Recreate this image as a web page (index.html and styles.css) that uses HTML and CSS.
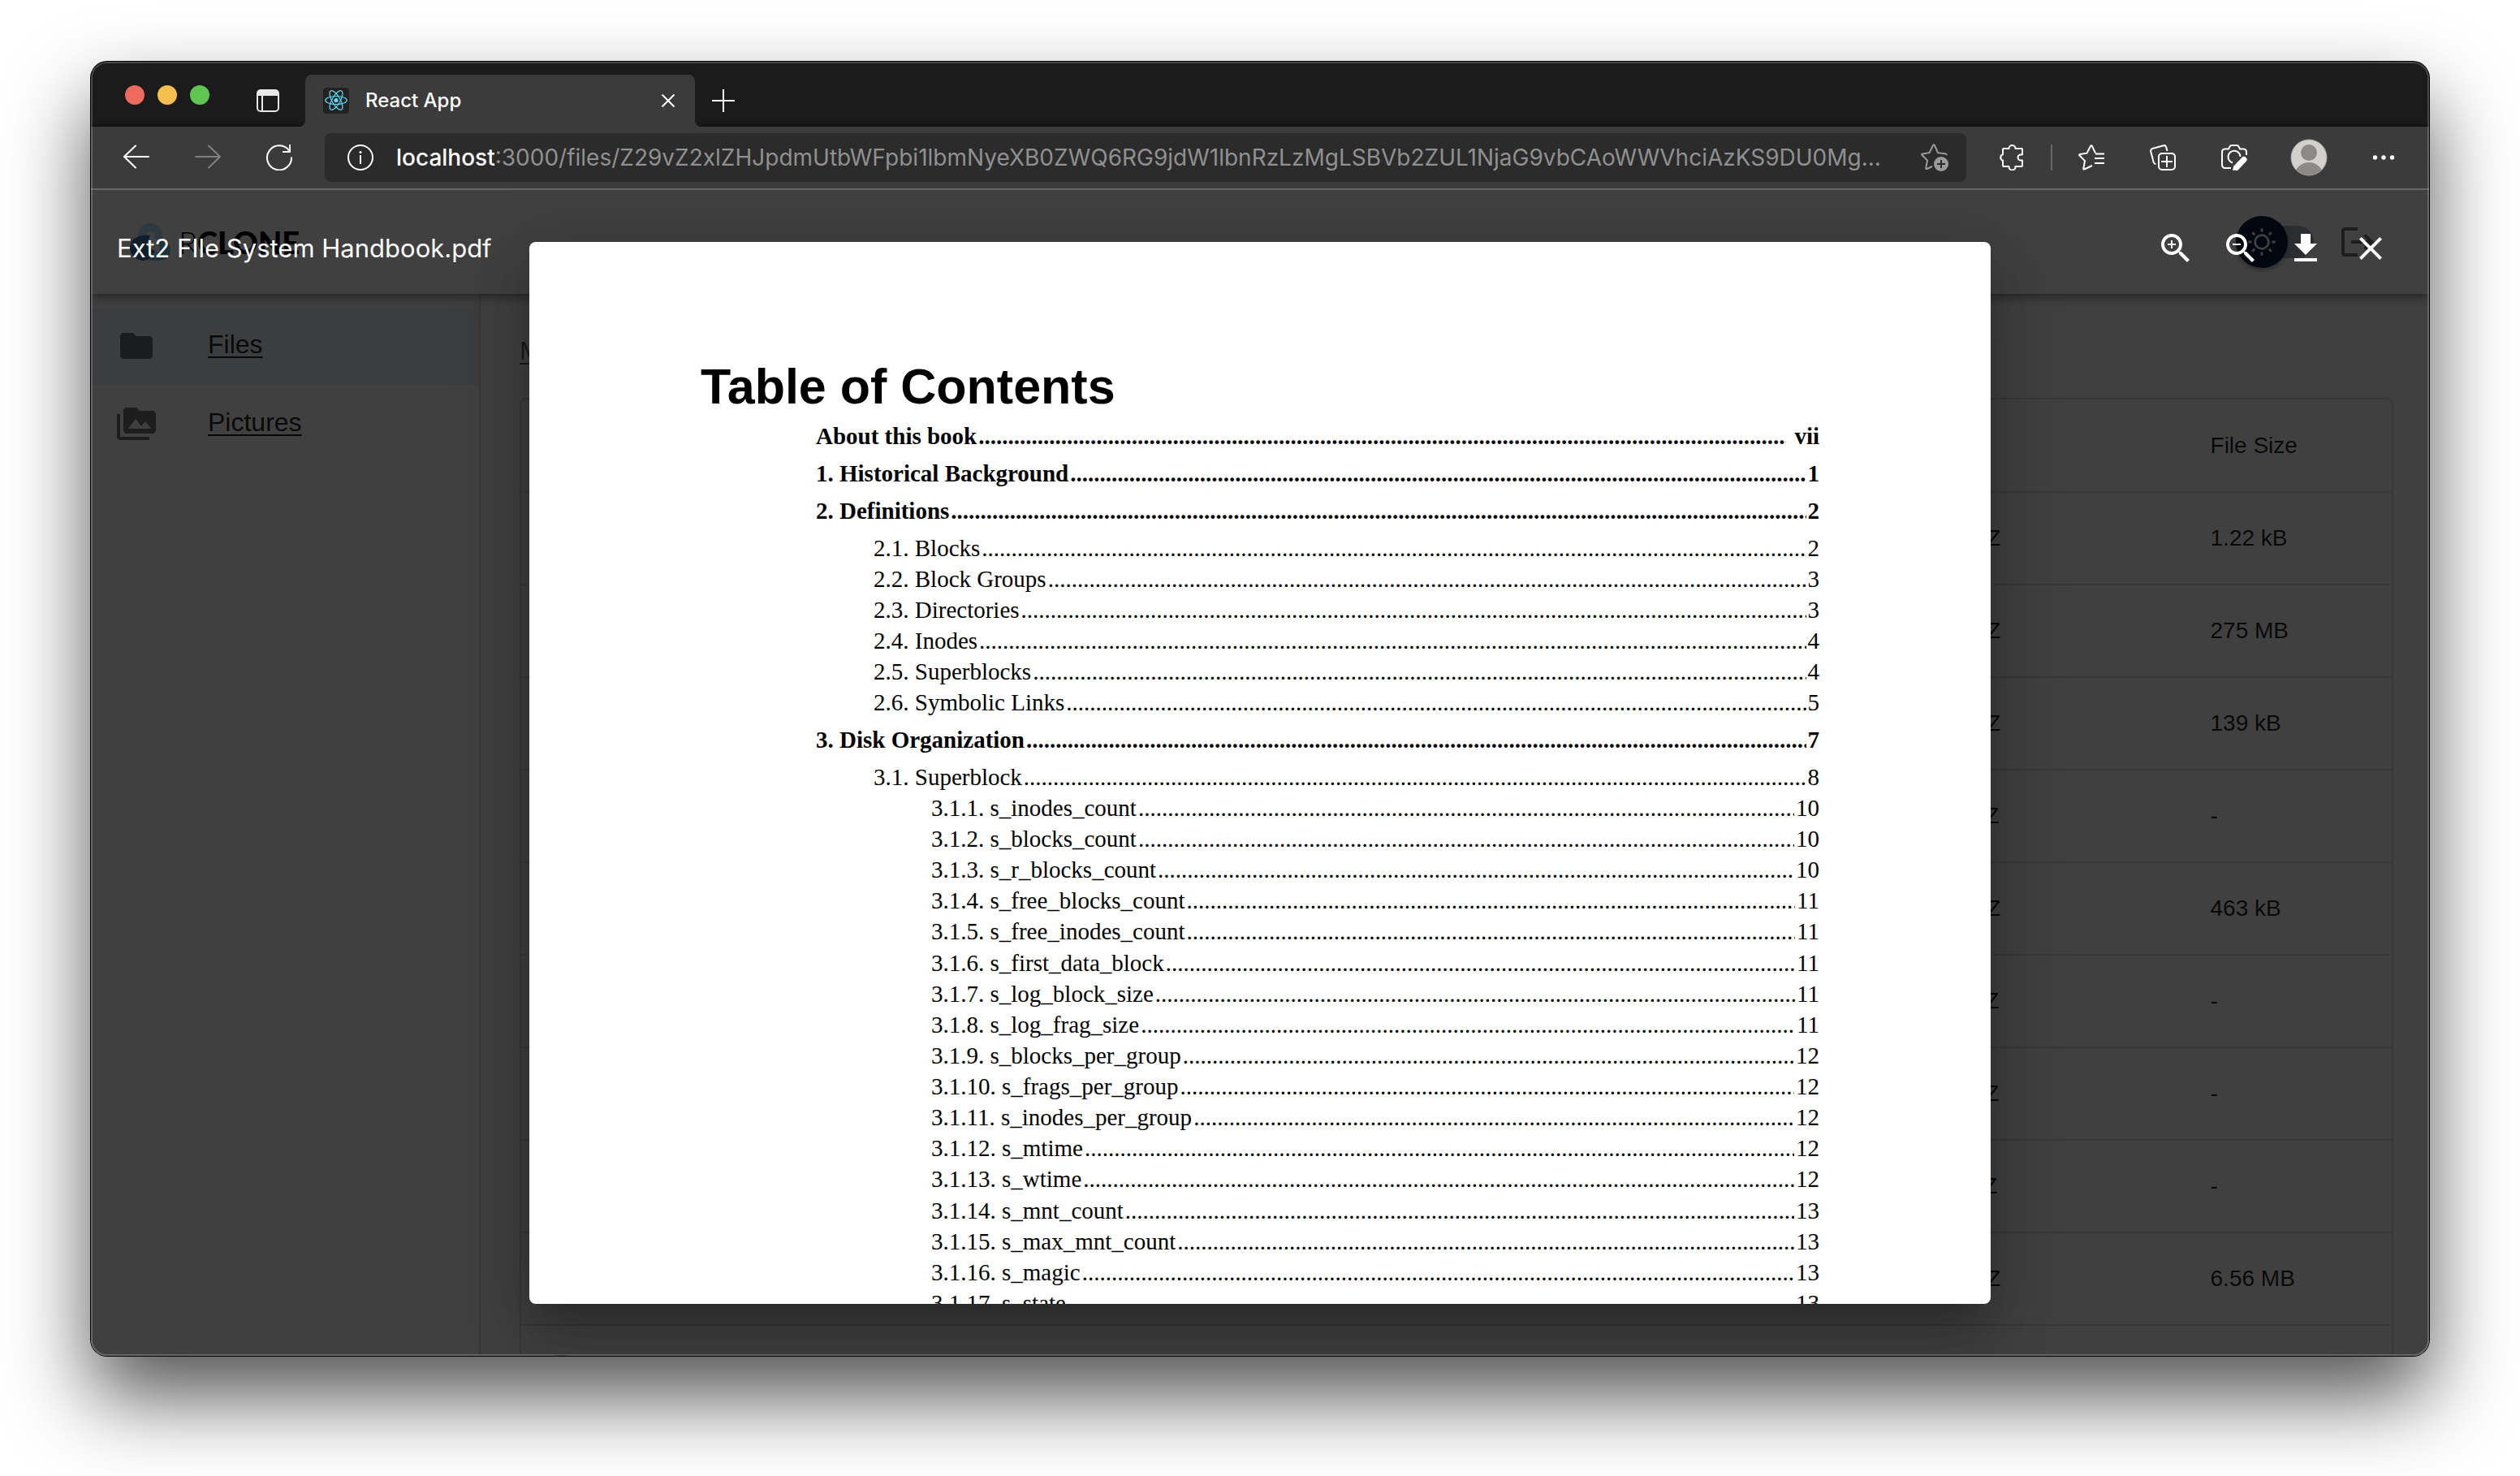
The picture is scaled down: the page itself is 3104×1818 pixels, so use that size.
FILE: index.html
```html
<!DOCTYPE html>
<html lang="en">
<head>
<meta charset="utf-8">
<title>React App</title>
<link rel="stylesheet" href="styles.css">
</head>
<body>
<div class="window">
  <header class="tab-strip">
    <div class="lights"><button class="light red" aria-label="Close window"></button><button class="light yellow" aria-label="Minimise"></button><button class="light green" aria-label="Full screen"></button></div>
    <button class="tab-menu" aria-label="Tab actions">
      <svg width="28" height="28" viewBox="0 0 28 28" fill="none"><rect x="1" y="1" width="26" height="26" rx="4" stroke="#e8e8e8" stroke-width="2"/><path d="M1 5a4 4 0 0 1 4-4h18a4 4 0 0 1 4 4v3H1z" fill="#e8e8e8"/><path d="M7 8v19" stroke="#e8e8e8" stroke-width="2"/></svg>
    </button>
    <div class="tab">
      <svg width="32" height="32" viewBox="0 0 32 32"><rect width="32" height="32" rx="4" fill="#222"/><g fill="none" stroke="#61dafb" stroke-width="1.2"><ellipse cx="16" cy="15.500" rx="13.300" ry="5"/><ellipse cx="16" cy="15.500" rx="13.300" ry="5" transform="rotate(60 16 15.500)"/><ellipse cx="16" cy="15.500" rx="13.300" ry="5" transform="rotate(120 16 15.500)"/></g><circle cx="16" cy="15.500" r="2.600" fill="#61dafb"/></svg>
      <span class="tab-title">React App</span>
      <button class="tab-close" aria-label="Close tab"><svg width="16" height="16" viewBox="0 0 16 16" stroke="#fff" stroke-width="2"><path d="M0.500.500l15 15M15.500.500l-15 15"/></svg></button>
    </div>
    <button class="new-tab" aria-label="New tab"><svg width="28" height="28" viewBox="0 0 28 28" stroke="#fff" stroke-width="2"><path d="M14 0v28M0 14h28"/></svg></button>
  </header>

  <div class="toolbar">
    <nav class="history" aria-label="History">
      <button aria-label="Back"><svg width="32" height="32" viewBox="0 0 32 32" fill="none" stroke="#fff" stroke-width="2" stroke-linecap="round"><path d="M1 15h30M15 1.500L1 15l14 13.500"/></svg></button>
      <button aria-label="Forward"><svg width="32" height="32" viewBox="0 0 32 32" fill="none" stroke="#7f7f7f" stroke-width="2" stroke-linecap="round"><path d="M1 15h30M17 1.500L31 15 17 28.500"/></svg></button>
      <button aria-label="Reload"><svg width="32" height="32" viewBox="0 0 32 32" fill="none" stroke="#fff" stroke-width="2"><path d="M31 15.500A15 15 0 1 1 28.500 8M29 0v9h-9"/></svg></button>
    </nav>
    <div class="address">
      <svg width="32" height="32" viewBox="0 0 32 32" fill="none" stroke="#fff" stroke-width="2"><circle cx="16" cy="16" r="15"/><path d="M16 13v11"/><circle cx="16" cy="9.500" r="1.500" fill="#fff" stroke="none"/></svg>
      <span class="url"><b>localhost</b>:3000/files/Z29vZ2xlZHJpdmUtbWFpbi1lbmNyeXB0ZWQ6RG9jdW1lbnRzLzMgLSBVb2ZUL1NjaG9vbCAoWWVhciAzKS9DU0Mg...</span>
      <button aria-label="Add to favourites"><svg width="34" height="34" viewBox="0 0 34 34" fill="none"><path d="M14 28l-6.500 3q-1.500.500-1.200-1l1.700-9.500-6.500-6.500q-1-1.200.500-1.500l8.500-1.300L15 2q1-1.500 2 0l4 9.200 9.500 1.300q1.500.300.800 1.500" stroke="#9b9b9b" stroke-width="2"/><circle cx="25" cy="25" r="9" fill="#9b9b9b"/><path d="M25 20v10M20 25h10" stroke="#2b2b2b" stroke-width="2"/></svg></button>
    </div>
    <div class="tools">
      <button aria-label="Extensions"><svg width="32" height="32" viewBox="0 0 32 32" fill="none" stroke="#fff" stroke-width="2" stroke-linejoin="round"><path d="M6 5h6.500a4 4 0 0 1 8 0H28q1 0 1 1v6.500h-2a3.500 3.500 0 0 0 0 7h2V26q0 1-1 1h-7.500v.500a4 4 0 0 1-8 0V27H6q-1 0-1-1v-6.200a4 4 0 0 1 0-7.600V6q0-1 1-1z"/></svg></button>
      <i class="divider"></i>
      <button aria-label="Favourites"><svg width="32" height="32" viewBox="0 0 32 32" fill="none" stroke="#fff" stroke-width="2"><path d="M17 26l-9.500 4.500q-1.500.500-1.200-1L8 20 1.500 13.500q-1-1.200.500-1.500l8.500-1.300L15 2q1-1.500 2 0l4 8.500M21 11.500h11M20 17h12M20 23h12"/></svg></button>
      <button aria-label="Collections"><svg width="32" height="32" viewBox="0 0 32 32" fill="none" stroke="#fff" stroke-width="2"><rect x="11" y="11" width="20" height="20" rx="4"/><path d="M21 14v14M14 21h14M7.500 24q-2 0-2.800-2L1.200 8.500q-.500-2.500 2-3.500L17 1.200q2.500-.500 3.200 2L21.500 8"/></svg></button>
      <button aria-label="Web capture"><svg width="32" height="32" viewBox="0 0 32 32" fill="none" stroke="#fff" stroke-width="2"><path d="M12 29H5q-4 0-4-4V9.500q0-4 4-4h4l1.500-3Q11.200 1 13 1h6q1.800 0 2.500 1.500l1.500 3h4q4 0 4 4V13M14 22.500A7.500 7.500 0 1 1 23.500 15"/><path d="M18.500 28.500l9.500-10" stroke-width="7" stroke-linecap="round"/><path d="M14 32l1.500-6 5 4.500z" fill="#fff" stroke="none"/></svg></button>
      <button class="profile" aria-label="Profile"><svg width="46" height="46" viewBox="0 0 46 46"><defs><clipPath id="disc"><circle cx="23" cy="23" r="22"/></clipPath></defs><circle cx="23" cy="23" r="22" fill="#d2d1ce" stroke="#a9a8a5" stroke-width="1"/><g clip-path="url(#disc)" fill="#8b8a88"><circle cx="23" cy="17" r="10"/><circle cx="23" cy="47" r="18"/></g></svg></button>
      <button aria-label="Settings and more"><svg width="32" height="32" viewBox="0 0 32 32" fill="#fff"><circle cx="5.500" cy="16" r="2.700"/><circle cx="16" cy="16" r="2.700"/><circle cx="26.500" cy="16" r="2.700"/></svg></button>
    </div>
  </div>

  <div class="viewport">
    <div class="app">
      <header class="app-bar">
        <a class="brand" href="#" aria-label="rclone">
          <svg width="52" height="52" viewBox="0 0 52 52"><path d="M10 25V18a15 15 0 0 1 30 0q0 4-1.500 7l-8-3q2-8-5.500-9-6 0-6 8z" fill="#b4e3f9"/><path d="M37 20q12 4 13 15 0 13-14 14H22q10-4 10-10 5 0 5-5 0-3-3-5z" fill="#70caf2"/><path d="M12 19q6-3 13-1l-4 10q2 6 10 9-4 12-15 12Q1 47 0 34 0 22 12 19z" fill="#3f79ad"/></svg>
          <span class="brand-name"><span class="brand-thin">R</span>CLONE</span>
        </a>
        <div class="app-actions">
          <label class="mode"><input type="checkbox" aria-label="Dark mode"><span class="thumb"><svg width="40" height="40" viewBox="0 0 20 20" fill="#fff"><path d="M9.305 1.667V3.750h1.389V1.667h-1.390zm-4.707 1.950l-.982.982L5.090 6.072l.982-.982-1.473-1.473zm10.802 0L13.927 5.090l.982.982 1.473-1.473-.982-.982zM10 5.139a4.872 4.872 0 00-4.862 4.860A4.872 4.872 0 0010 14.862 4.872 4.872 0 0014.860 10 4.872 4.872 0 0010 5.139zm0 1.389A3.462 3.462 0 0113.471 10a3.462 3.462 0 01-3.473 3.472A3.462 3.462 0 016.527 10 3.462 3.462 0 0110 6.528zM1.665 9.305v1.390h2.083v-1.390H1.666zm14.583 0v1.390h2.084v-1.390h-2.084zM5.090 13.928L3.616 15.400l.982.982 1.473-1.473-.982-.982zm9.820 0l-.982.982 1.473 1.473.982-.982-1.473-1.473zM9.305 16.250v2.083h1.389V16.250h-1.390z"/></svg></span></label>
          <button class="icon-button muted" aria-label="Log out"><svg width="48" height="48" viewBox="0 0 24 24" fill="currentColor"><path d="m17 7-1.410 1.410L18.170 11H8v2h10.170l-2.580 2.580L17 17l5-5zM4 5h8V3H4c-1.100 0-2 .9-2 2v14c0 1.100.9 2 2 2h8v-2H4V5z"/></svg></button>
        </div>
      </header>
      <div class="app-body">
        <nav class="sidebar">
          <a class="side-item selected" href="#"><svg width="48" height="48" viewBox="0 0 24 24" fill="currentColor"><path d="M10 4H4c-1.100 0-1.990.9-1.990 2L2 18c0 1.100.9 2 2 2h16c1.100 0 2-.9 2-2V8c0-1.100-.9-2-2-2h-8l-2-2z"/></svg><span>Files</span></a>
          <a class="side-item" href="#"><svg width="48" height="48" viewBox="0 0 24 24" fill="currentColor"><path d="M2 6H0v5h.01L0 20c0 1.100.9 2 2 2h18v-2H2V6zm20-2h-8l-2-2H6c-1.100 0-1.990.9-1.990 2L4 16c0 1.100.9 2 2 2h16c1.100 0 2-.9 2-2V6c0-1.100-.9-2-2-2zM7 15l4.500-6 3.500 4.510 2.500-3.010L21 15H7z"/></svg><span>Pictures</span></a>
        </nav>
        <main class="content">
          <a class="crumb" href="#">My Files</a>
          <div class="card">
            <table class="files">
              <colgroup><col class="col-name"><col class="col-date"><col class="col-size"></colgroup>
              <thead><tr><th>Name</th><th>Last Modified</th><th>File Size</th></tr></thead>
              <tbody>
                <tr><td></td><td>2020-09-24T08:35:06.000Z</td><td>1.22 kB</td></tr>
                <tr><td></td><td>2020-09-24T08:35:26.000Z</td><td>275 MB</td></tr>
                <tr><td></td><td>2020-10-02T04:25:36.000Z</td><td>139 kB</td></tr>
                <tr><td></td><td>2020-11-02T04:25:36.000Z</td><td>-</td></tr>
                <tr><td></td><td>2020-10-08T03:25:36.000Z</td><td>463 kB</td></tr>
                <tr><td></td><td>2020-11-08T03:25:36.000Z</td><td>-</td></tr>
                <tr><td></td><td>2020-11-20T05:25:36.000Z</td><td>-</td></tr>
                <tr><td></td><td>2020-11-11T05:25:36.000Z</td><td>-</td></tr>
                <tr><td></td><td>2020-09-20T05:25:36.000Z</td><td>6.56 MB</td></tr>
                <tr><td><svg width="48" height="48" viewBox="0 0 24 24" fill="currentColor"><path d="M6 2c-1.100 0-1.990.9-1.990 2L4 20c0 1.100.890 2 1.990 2H18c1.100 0 2-.9 2-2V8l-6-6H6zm7 7V3.500L18.500 9H13z"/></svg></td><td></td><td></td></tr>
              </tbody>
            </table>
          </div>
        </main>
      </div>
    </div>

    <div class="backdrop">
      <div class="paper" role="dialog" aria-label="Ext2 FIle System Handbook.pdf">
        <article class="page">
          <h1>Table of Contents</h1>
          <ul class="toc">
            <li><a class="row chapter" href="#">About this book<i class="dots roman"></i>vii</a></li>
            <li><a class="row chapter" href="#">1. Historical Background<i class="dots"></i>1</a></li>
            <li><a class="row chapter" href="#">2. Definitions<i class="dots"></i>2</a>
              <ul class="sub">
                <li><a class="row" href="#">2.1. Blocks<i class="dots"></i>2</a></li>
                <li><a class="row" href="#">2.2. Block Groups<i class="dots"></i>3</a></li>
                <li><a class="row" href="#">2.3. Directories<i class="dots"></i>3</a></li>
                <li><a class="row" href="#">2.4. Inodes<i class="dots"></i>4</a></li>
                <li><a class="row" href="#">2.5. Superblocks<i class="dots"></i>4</a></li>
                <li><a class="row" href="#">2.6. Symbolic Links<i class="dots"></i>5</a></li>
              </ul>
            </li>
            <li><a class="row chapter" href="#">3. Disk Organization<i class="dots"></i>7</a>
              <ul class="sub">
                <li><a class="row" href="#">3.1. Superblock<i class="dots"></i>8</a>
                  <ul class="sub fields">
                    <li><a class="row" href="#">3.1.1. s_inodes_count<i class="dots"></i>10</a></li>
                    <li><a class="row" href="#">3.1.2. s_blocks_count<i class="dots"></i>10</a></li>
                    <li><a class="row" href="#">3.1.3. s_r_blocks_count<i class="dots"></i>10</a></li>
                    <li><a class="row" href="#">3.1.4. s_free_blocks_count<i class="dots"></i>11</a></li>
                    <li><a class="row" href="#">3.1.5. s_free_inodes_count<i class="dots"></i>11</a></li>
                    <li><a class="row" href="#">3.1.6. s_first_data_block<i class="dots"></i>11</a></li>
                    <li><a class="row" href="#">3.1.7. s_log_block_size<i class="dots"></i>11</a></li>
                    <li><a class="row" href="#">3.1.8. s_log_frag_size<i class="dots"></i>11</a></li>
                    <li><a class="row" href="#">3.1.9. s_blocks_per_group<i class="dots"></i>12</a></li>
                    <li><a class="row" href="#">3.1.10. s_frags_per_group<i class="dots"></i>12</a></li>
                    <li><a class="row" href="#">3.1.11. s_inodes_per_group<i class="dots"></i>12</a></li>
                    <li><a class="row" href="#">3.1.12. s_mtime<i class="dots"></i>12</a></li>
                    <li><a class="row" href="#">3.1.13. s_wtime<i class="dots"></i>12</a></li>
                    <li><a class="row" href="#">3.1.14. s_mnt_count<i class="dots"></i>13</a></li>
                    <li><a class="row" href="#">3.1.15. s_max_mnt_count<i class="dots"></i>13</a></li>
                    <li><a class="row" href="#">3.1.16. s_magic<i class="dots"></i>13</a></li>
                    <li><a class="row" href="#">3.1.17. s_state<i class="dots"></i>13</a></li>
                  </ul>
                </li>
              </ul>
            </li>
          </ul>
        </article>
      </div>
      <div class="viewer-bar">
        <h2>Ext2 FIle System Handbook.pdf</h2>
        <button class="icon-button" aria-label="Zoom in"><svg width="48" height="48" viewBox="0 0 24 24" fill="currentColor"><path d="M15.500 14h-.790l-.280-.270C15.410 12.590 16 11.110 16 9.500 16 5.910 13.090 3 9.500 3S3 5.910 3 9.500 5.910 16 9.500 16c1.610 0 3.090-.590 4.230-1.570l.270.280v.790l5 4.990L20.490 19l-4.990-5zm-6 0C7.010 14 5 11.990 5 9.500S7.010 5 9.500 5 14 7.010 14 9.500 11.990 14 9.500 14zM12 10h-2v2H9v-2H7V9h2V7h1v2h2v1z"/></svg></button>
        <button class="icon-button" aria-label="Zoom out"><svg width="48" height="48" viewBox="0 0 24 24" fill="currentColor"><path d="M15.500 14h-.790l-.280-.270C15.410 12.590 16 11.110 16 9.500 16 5.910 13.090 3 9.500 3S3 5.910 3 9.500 5.910 16 9.500 16c1.610 0 3.090-.590 4.230-1.570l.270.280v.790l5 4.990L20.490 19l-4.990-5zm-6 0C7.010 14 5 11.990 5 9.500S7.010 5 9.500 5 14 7.010 14 9.500 11.990 14 9.500 14zM7 9h5v1H7z"/></svg></button>
        <button class="icon-button" aria-label="Download"><svg width="48" height="48" viewBox="0 0 24 24" fill="currentColor"><path d="M19 9h-4V3H9v6H5l7 7 7-7zM5 18v2h14v-2H5z"/></svg></button>
        <button class="icon-button" aria-label="Close"><svg width="48" height="48" viewBox="0 0 24 24" fill="currentColor"><path d="M19 6.410L17.590 5 12 10.590 6.410 5 5 6.410 10.590 12 5 17.590 6.410 19 12 13.410 17.590 19 19 17.590 13.410 12z"/></svg></button>
      </div>
    </div>
  </div>
</div>
</body>
</html>
```
FILE: styles.css
```css
* { box-sizing: border-box; }

body {
  margin: 0;
  height: 100vh;
  padding: 76px 112px 148px;
  display: flex;
  background: #fff;
  overflow: hidden;
  font-family: "Liberation Sans", Arial, sans-serif;
}

button {
  padding: 0;
  border: 0;
  background: none;
  color: inherit;
}

svg { display: block; flex: none; }
ul { list-style: none; margin: 0; padding: 0; }

/* Browser window */
.window {
  position: relative;
  flex: 1;
  min-width: 0;
  display: flex;
  flex-direction: column;
  overflow: hidden;
  border-radius: 20px;
  background: #1b1b1b;
  box-shadow: 0 0 0 1px #000, 0 50px 100px rgba(0, 0, 0, .68);
}

.window::after {
  content: "";
  position: absolute;
  inset: 0;
  z-index: 3;
  border: 2px solid rgba(255, 255, 255, .2);
  border-radius: 20px;
  pointer-events: none;
}

.tab-strip {
  height: 80px;
  flex: none;
  display: flex;
  align-items: flex-end;
  box-shadow: inset 0 -4px 4px -2px rgba(0, 0, 0, .4);
}

.lights { display: flex; gap: 16px; padding: 0 58px 27px 42px; }
.light { width: 24px; height: 24px; border-radius: 50%; }
.red { background: #ed6a5f; }
.yellow { background: #f5bf4f; }
.green { background: #61c554; }

.tab-menu { padding: 0 32px 18px 0; }

.tab {
  position: relative;
  width: 480px;
  height: 64px;
  padding: 0 25px 0 22px;
  display: flex;
  align-items: center;
  background: #3b3b3b;
  border-radius: 8px 8px 0 0;
  color: #fff;
}

.tab::before, .tab::after {
  content: "";
  position: absolute;
  bottom: 0;
  width: 8px;
  height: 8px;
}
.tab::before { right: 100%; background: radial-gradient(circle at 0 0, transparent 8px, #3b3b3b 8px); }
.tab::after { left: 100%; background: radial-gradient(circle at 100% 0, transparent 8px, #3b3b3b 8px); }

.tab-title { flex: 1; padding-left: 20px; font: 500 24px/32px Inter, sans-serif; }
.new-tab { padding: 0 0 18px 21px; }

.toolbar {
  height: 78px;
  flex: none;
  padding: 0 40px;
  display: flex;
  align-items: center;
  gap: 40px;
  background: #3b3b3b;
  border-bottom: 2px solid #666;
}

.history { display: flex; gap: 56px; }

.address {
  flex: 1;
  min-width: 0;
  height: 60px;
  padding: 0 22px 0 28px;
  display: flex;
  align-items: center;
  gap: 28px;
  border-radius: 8px;
  background: #2b2b2b;
}

.url {
  flex: 1;
  min-width: 0;
  overflow: hidden;
  white-space: nowrap;
  font: 400 28px/40px Inter, sans-serif;
  color: #909090;
}
.url b { font-weight: 500; color: #fff; }

.tools { display: flex; align-items: center; gap: 56px; }
.divider { width: 2px; height: 32px; margin: 0 -24px; background: #666; }
.profile { margin: 0 -3px; }

/* File manager */
.viewport {
  position: relative;
  flex: 1;
  min-height: 0;
  overflow: hidden;
  background: #fff;
}

.app-bar {
  position: relative;
  z-index: 1;
  height: 128px;
  padding: 0 48px;
  display: flex;
  align-items: center;
  justify-content: space-between;
  background: #fff;
  box-shadow: 0 4px 8px -2px rgba(0, 0, 0, .2), 0 8px 10px rgba(0, 0, 0, .14), 0 2px 20px rgba(0, 0, 0, .12);
}

.brand { display: flex; align-items: center; gap: 8px; color: #000; text-decoration: none; }
.brand-name { font: 900 38px/48px Lato, sans-serif; }
.brand-thin { font-weight: 300; }

.app-actions { display: flex; align-items: center; gap: 14px; }

.icon-button { padding: 16px; }
.muted { color: rgba(0, 0, 0, .54); }

.mode {
  display: flex;
  align-items: center;
  width: 96px;
  height: 40px;
  border-radius: 20px;
  background: #aab4be;
}
.mode input { position: absolute; opacity: 0; }

.thumb {
  width: 64px;
  height: 64px;
  flex: none;
  display: grid;
  place-items: center;
  border-radius: 50%;
  background: #001e3c;
  box-shadow: 0 4px 4px rgba(0, 0, 0, .25);
}

.app-body { display: flex; }

.sidebar {
  width: 480px;
  min-height: 1400px;
  flex: none;
  padding-top: 16px;
  border-right: 2px solid rgba(0, 0, 0, .12);
}

.side-item {
  height: 96px;
  padding: 0 32px;
  display: flex;
  align-items: center;
  gap: 64px;
  color: rgba(0, 0, 0, .87);
  font-size: 32px;
  text-decoration: none;
}
.side-item span {
  padding-bottom: 4px;
  text-decoration: underline;
  text-underline-offset: 4px;
  text-decoration-thickness: 2px;
}
.side-item svg { color: rgba(0, 0, 0, .54); }
.selected { background: rgba(25, 118, 210, .08); }

.content { flex: 1; min-width: 0; padding: 46px 44px 0 48px; }

.crumb {
  display: block;
  margin-bottom: 34px;
  font-size: 32px;
  line-height: 48px;
  color: rgba(0, 0, 0, .6);
  text-underline-offset: 4px;
  text-decoration-thickness: 2px;
}

.card { border: 2px solid rgba(0, 0, 0, .12); border-radius: 8px; }

.files { width: 100%; table-layout: fixed; border-collapse: collapse; color: rgba(0, 0, 0, .87); }
.files th, .files td {
  height: 114px;
  padding: 0 30px;
  border-bottom: 2px solid rgba(0, 0, 0, .12);
  text-align: left;
  font-size: 28px;
  font-weight: 400;
}
.files svg { color: rgba(0, 0, 0, .54); }
.col-name { width: 63%; }
.col-date { width: 26%; }
.col-size { width: 11%; }

/* Document viewer */
.backdrop {
  position: absolute;
  inset: 0;
  z-index: 2;
  display: flex;
  justify-content: center;
  padding: 64px;
  background: rgba(0, 0, 0, .75);
}

.viewer-bar {
  position: absolute;
  inset: 32px 32px auto;
  display: flex;
  align-items: center;
  color: #fff;
}
.viewer-bar h2 { flex: 1; margin: 0; font: 400 31px/48px Inter, sans-serif; }

.paper {
  flex: 0 1 1800px;
  overflow: hidden;
  border-radius: 8px;
  background: #fff;
  box-shadow: 0 22px 30px -14px rgba(0, 0, 0, .2), 0 48px 76px 6px rgba(0, 0, 0, .14), 0 18px 92px 16px rgba(0, 0, 0, .12);
}

.page { padding: 144px 211px 0; color: #000; }
.page h1 { margin: 0; font-size: 61px; line-height: 68px; }

.toc { padding-left: 142px; font: 29px/38px "Liberation Serif", "Times New Roman", serif; }
.sub { padding-left: 71px; }
.fields {
  display: grid;
  grid-template-columns: minmax(0, 1fr);
  grid-auto-rows: 1fr;
  height: 648px;
}

.row { display: flex; white-space: nowrap; color: #000; text-decoration: none; }
.chapter { margin: 8px 0; font-weight: 700; }

/* Dotted leader: one line of dots, as many as fit between title and page */
.dots {
  flex: 1;
  height: 38px;
  min-width: 0;
  overflow: hidden;
  margin: 0 2px;
  font-style: normal;
  text-align: right;
  white-space: normal;
  word-break: break-all;
}
.dots::before {
  content: "........................................................................................................................................................................................................................................................................................................................";
}
.roman { margin-right: 10px; }
```
